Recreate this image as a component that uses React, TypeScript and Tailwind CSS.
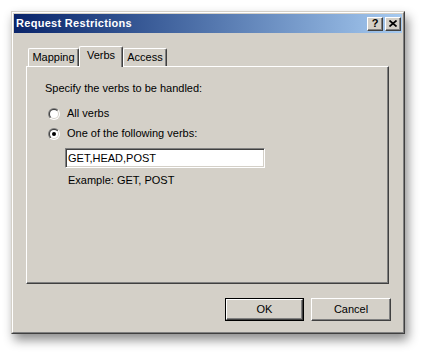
import React from "react";

function Radio({ checked, id }: { checked?: boolean; id: string }) {
  return (
    <svg width="12" height="12" viewBox="0 0 12 12" className="shrink-0">
      <defs>
        <linearGradient id={`o${id}`} x1="0" y1="0" x2="1" y2="1">
          <stop offset="0.5" stopColor="#808080" />
          <stop offset="0.5" stopColor="#ffffff" />
        </linearGradient>
        <linearGradient id={`i${id}`} x1="0" y1="0" x2="1" y2="1">
          <stop offset="0.5" stopColor="#404040" />
          <stop offset="0.5" stopColor="#d4d0c8" />
        </linearGradient>
      </defs>
      <circle cx="6" cy="6" r="6" fill={`url(#o${id})`} />
      <circle cx="6" cy="6" r="5" fill={`url(#i${id})`} />
      <circle cx="6" cy="6" r="4" fill="#ffffff" />
      {checked && <circle cx="6" cy="6" r="2" fill="#000000" />}
    </svg>
  );
}

function Tab({ label, selected, w }: { label: string; selected?: boolean; w: string }) {
  if (selected) {
    return (
      <div
        className={`${w} h-[21px] mb-[-1px] relative z-10 bg-[#d4d0c8] border-t border-l border-r border-t-white border-l-white border-r-[#404040] shadow-[inset_-1px_0_#808080] rounded-tl-[2px] rounded-tr-[2px] flex items-start justify-center pt-[2px] text-[11px] leading-[13px] text-black`}
      >
        {label}
      </div>
    );
  }
  return (
    <div
      className={`${w} h-[18px] bg-[#d4d0c8] border-t border-l border-r border-t-white border-l-white border-r-[#404040] shadow-[inset_-1px_0_#808080] rounded-tl-[2px] rounded-tr-[2px] flex items-center justify-center text-[11px] leading-[13px] text-black`}
    >
      {label}
    </div>
  );
}

export default function App() {
  return (
    <div className="w-[424px] h-[353px] bg-white pt-[11px] pl-[11px] font-['Liberation_Sans',Arial,sans-serif]">
      <div className="w-[394px] h-[323px] bg-[#d4d0c8] border border-t-[#d4d0c8] border-l-[#d4d0c8] border-r-[#404040] border-b-[#404040] shadow-[3px_6px_10px_rgba(0,0,0,0.45)]">
        <div className="w-full h-full border border-t-white border-l-white border-r-[#808080] border-b-[#808080] flex flex-col">
          {/* Title bar */}
          <div className="h-[19px] mt-[1px] mx-[1px] flex items-center justify-between bg-gradient-to-r from-[#0a246a] to-[#a6caf0]">
            <div className="pl-[2px] text-white font-bold text-[11px] leading-[13px] tracking-[0.3px]">Request Restrictions</div>
            <div className="flex items-center gap-[2px] mr-[1px]">
              <div className="w-[16px] h-[14px] bg-[#d4d0c8] border border-t-white border-l-white border-r-[#404040] border-b-[#404040] shadow-[inset_-1px_-1px_#808080] flex items-center justify-center">
                <span className="text-[11px] leading-[11px] font-bold text-black">?</span>
              </div>
              <div className="w-[16px] h-[14px] bg-[#d4d0c8] border border-t-white border-l-white border-r-[#404040] border-b-[#404040] shadow-[inset_-1px_-1px_#808080] flex items-center justify-center">
                <svg width="8" height="7" viewBox="0 0 8 7">
                  <path d="M0.5 0.5 L7.5 6.5 M7.5 0.5 L0.5 6.5" stroke="#000" strokeWidth="1.7" />
                </svg>
              </div>
            </div>
          </div>

          {/* Tabs */}
          <div className="mt-[13px] ml-[15px] h-[20px] flex items-end">
            <Tab label="Mapping" w="w-[51px]" />
            <Tab label="Verbs" w="w-[44px]" selected />
            <Tab label="Access" w="w-[44px]" />
          </div>

          {/* Panel */}
          <div className="ml-[13px] w-[363px] h-[218px] border border-t-white border-l-white border-r-[#404040] border-b-[#404040] shadow-[inset_-1px_-1px_#808080] pl-[18px] pt-[15px] flex flex-col text-[11px] leading-[13px] text-black">
            <div>Specify the verbs to be handled:</div>
            <div className="mt-[12px] ml-[3px] flex items-center gap-[7px] h-[13px]">
              <Radio id="a" />
              <span>All verbs</span>
            </div>
            <div className="mt-[7px] ml-[3px] flex items-center gap-[7px] h-[13px]">
              <Radio id="b" checked />
              <span>One of the following verbs:</span>
            </div>
            <div className="mt-[8px] ml-[20px] w-[200px] h-[20px] bg-white border border-t-[#808080] border-l-[#808080] border-r-white border-b-white shadow-[inset_1px_1px_#404040,inset_-1px_-1px_#d4d0c8] flex items-center pl-[2px]">
              GET,HEAD,POST
            </div>
            <div className="mt-[6px] ml-[23px]">Example: GET, POST</div>
          </div>

          {/* Buttons */}
          <div className="mt-[14px] mr-[12px] flex justify-end gap-[7px]">
            <div className="w-[79px] h-[23px] border border-black">
              <div className="w-full h-full border border-t-white border-l-white border-r-[#404040] border-b-[#404040] shadow-[inset_-1px_-1px_#808080] flex items-center justify-center text-[11px] leading-[13px] text-black">
                OK
              </div>
            </div>
            <div className="w-[80px] h-[23px] border border-t-white border-l-white border-r-[#404040] border-b-[#404040] shadow-[inset_-1px_-1px_#808080] flex items-center justify-center text-[11px] leading-[13px] text-black">
              Cancel
            </div>
          </div>
        </div>
      </div>
    </div>
  );
}
